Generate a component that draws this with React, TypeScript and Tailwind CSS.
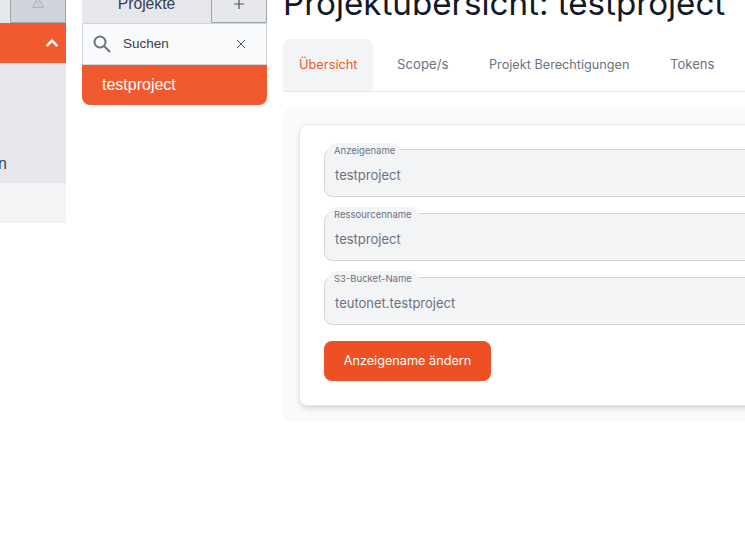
import React from "react";

const body = "font-['Inter',sans-serif]";

function Field({ label, value }: { label: string; value: string }) {
  return (
    <div className="relative h-12 rounded-lg border border-[#d1d5db] bg-[#f3f4f6] pl-[10px] pt-[15px] text-[13px] leading-[21px] text-[#6b7280]">
      <span className="absolute -top-[7px] left-[3px] h-[13px] rounded-t-lg bg-[#f3f4f6] px-[6px] text-[9.5px] leading-[16px] text-[#6b7280]">{label}</span>
      {value}
    </div>
  );
}

export default function App() {
  return (
    <div className={`h-[560px] w-[745px] overflow-hidden bg-white ${body}`}>
      <div className="flex items-start gap-4 -mt-[18px]">
        {/* navigation column, cut off by the left edge */}
        <div className="-ml-[200px] w-[266px] shrink-0 font-['Liberation_Sans',sans-serif]">
          <div className="flex h-[41px] justify-end bg-[#e5e7eb]">
            <div className="flex w-[56px] items-end justify-center rounded-b-[1px] border border-[#9ca3af] bg-[#d1d5db] pb-[13px] text-[#9ca3af]">
              <svg width="14" height="13" viewBox="0 0 24 24" fill="none" stroke="currentColor" strokeWidth="1.5">
                <path d="M12 3 2 21h20L12 3z" strokeLinejoin="round" />
                <path d="M12 10v5M12 17.5v1" />
              </svg>
            </div>
          </div>
          <div className="flex h-10 items-center justify-end bg-[#f1592f] pr-[7px]">
            <svg width="14" height="14" viewBox="0 0 24 24" fill="none" stroke="white" strokeWidth="4.5" strokeLinecap="round" strokeLinejoin="round">
              <path d="m4 16 8-8 8 8" />
            </svg>
          </div>
          <div className="flex h-[120px] items-end justify-end bg-[#e5e7eb] pb-[9px] text-[16px] leading-[20px] text-[#374151]">
            <span className="mr-[59px]">n</span>
          </div>
          <div className="h-10 bg-[#f3f4f6]" />
        </div>

        {/* project column */}
        <div className="w-[185px] shrink-0 font-['Liberation_Sans',sans-serif]">
          <div className="flex h-[41px]">
            <div className="flex flex-1 items-end justify-center bg-[#e5e7eb] pb-[9px] text-[15.7px] leading-[20px] text-[#374151]">Projekte</div>
            <div className="flex w-[56px] items-end justify-center rounded-b-[1px] border border-[#9ca3af] bg-[#e5e7eb] pb-[12px] text-[#4b5563]">
              <svg width="12" height="12" viewBox="0 0 12 12" stroke="currentColor" strokeWidth="1.2">
                <path d="M6 1v10M1 6h10" />
              </svg>
            </div>
          </div>
          <div className="flex h-[42px] items-center border border-[#d1d5db] bg-[#f9fafb] pl-[9px] pr-[20px] text-[13.5px] text-[#374151]">
            <svg width="20" height="20" viewBox="0 0 20 20" fill="none" stroke="#6b7280" strokeWidth="2">
              <circle cx="8" cy="8" r="5.5" />
              <path d="m12 12 6 6" />
            </svg>
            <span className="ml-[11px] flex-1">Suchen</span>
            <svg width="10" height="10" viewBox="0 0 10 10" stroke="#374151" strokeWidth="0.9">
              <path d="m1 1 8 8M9 1 1 9" />
            </svg>
          </div>
          <div className="flex h-10 items-center rounded-b-lg bg-[#f1592f] pl-5 text-[16px] text-white">testproject</div>
        </div>

        {/* main */}
        <div className="w-[700px] shrink-0">
          <h1 className="mb-[16px] h-[41px] pt-[3px] text-[33.15px] leading-[36px] text-[#111827]">Projektübersicht: testproject</h1>
          <div className="flex border-b border-[#e5e7eb] text-[12.8px] leading-[20px]">
            <div className="h-[52px] w-[90px] rounded-t-lg bg-[#f3f4f6] pl-4 pt-4 text-[#f3582f]">Übersicht</div>
            <div className="h-[52px] w-[92px] pl-6 pt-[15px] text-[13.2px] text-[#6b7280]">Scope/s</div>
            <div className="h-[52px] w-[181px] pl-6 pt-4 text-[12.7px] text-[#6b7280]">Projekt Berechtigungen</div>
            <div className="h-[52px] pl-6 pr-4 pt-[15px] text-[13.1px] text-[#6b7280]">Tokens</div>
          </div>
          <div className="mt-4 rounded-lg bg-[#f9fafb] p-4">
            <div className="rounded-lg border border-[#e5e7eb] bg-white p-6 shadow-md">
              <div className="flex flex-col gap-4">
                <Field label="Anzeigename" value="testproject" />
                <Field label="Ressourcenname" value="testproject" />
                <Field label="S3-Bucket-Name" value="teutonet.testproject" />
              </div>
              <button className="mt-4 h-10 w-[167px] rounded-lg bg-[#ee5025] text-[12.7px] text-white">Anzeigename ändern</button>
            </div>
          </div>
        </div>
      </div>
    </div>
  );
}
